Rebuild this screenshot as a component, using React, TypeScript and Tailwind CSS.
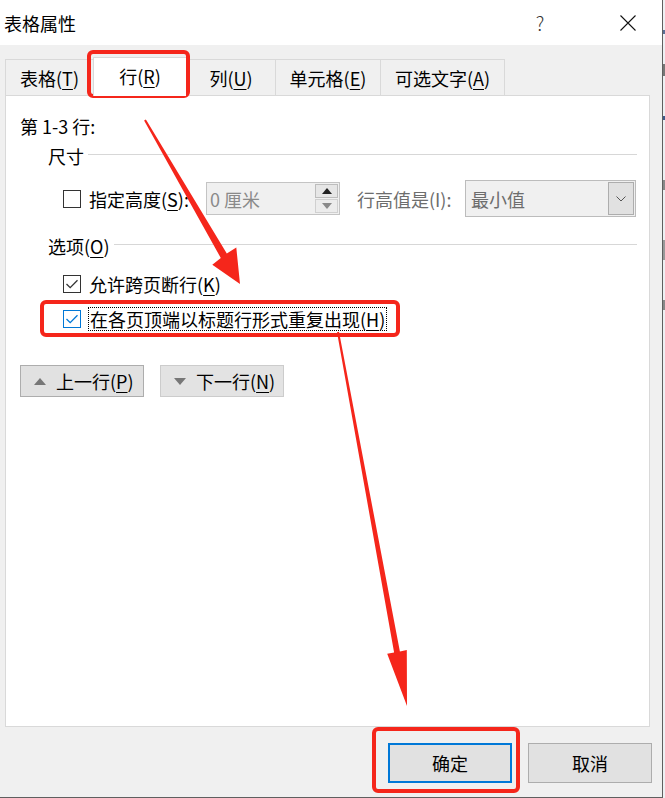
import React from "react";

function U({ c }: { c: string }) {
  return <span className="underline decoration-1 underline-offset-[3px]">{c}</span>;
}

function Check({ checked, focus }: { checked?: boolean; focus?: boolean }) {
  return (
    <div
      className={
        focus
          ? "w-[18px] h-[18px] border border-[#0078d7] bg-white flex items-center justify-center shrink-0"
          : "w-[18px] h-[18px] border border-[#333333] bg-white flex items-center justify-center shrink-0"
      }
    >
      {checked && (
        <svg width="16" height="16" viewBox="0 0 16 16">
          <path d="M2.5 8 L6.2 11.7 L13.5 4.3" fill="none" stroke={focus ? "#0078d7" : "#333333"} strokeWidth="1.3" />
        </svg>
      )}
    </div>
  );
}

function Tab({ w, active, last, children }: { w: string; active?: boolean; last?: boolean; children: React.ReactNode }) {
  if (active) {
    return (
      <div className={`${w} relative z-10 h-[39px] -mb-px bg-white border-t border-l border-[#d9d9d9] flex items-center justify-center pb-[2px]`}>
        {children}
      </div>
    );
  }
  return (
    <div
      className={
        last
          ? `${w} h-[36px] bg-[#f0f0f0] border-t border-l border-r border-[#d9d9d9] flex items-center justify-center`
          : `${w} h-[36px] bg-[#f0f0f0] border-t border-l border-[#d9d9d9] flex items-center justify-center`
      }
    >
      {children}
    </div>
  );
}

function GroupHeader({ children }: { children: React.ReactNode }) {
  return (
    <div className="flex items-center h-[24px] pl-[42px] pr-[12px]">
      <span>{children}</span>
      <div className="flex-1 h-px bg-[#d7d7d7] ml-[4px] -mt-[3px]" />
    </div>
  );
}

export default function App() {
  return (
    <div className="w-[665px] h-[798px] flex bg-[#f0f0f0] text-black text-[18px] leading-[24px] [font-family:'Noto_Sans_CJK_SC','Microsoft_YaHei',sans-serif] overflow-hidden relative">
      <div className="w-[663px] h-[798px] border-r border-b border-[#5f5f5f] flex flex-col bg-[#f0f0f0]">
        {/* Title bar */}
        <div className="h-[45px] bg-white flex items-center pl-[4px] pr-[14px]">
          <span className="text-[18px]">表格属性</span>
          <div className="flex-1" />
          <div className="w-[46px] flex justify-center text-[#333333] text-[19px] font-light">?</div>
          <div className="w-[40px] ml-[45px] flex justify-center">
            <svg width="16" height="16" viewBox="0 0 16 16">
              <path d="M0.5 0.5 L15.5 15.5 M15.5 0.5 L0.5 15.5" stroke="#111" strokeWidth="1.1" fill="none" />
            </svg>
          </div>
        </div>

        {/* Tabs */}
        <div className="h-[50px] flex items-end pl-[5px]">
          <Tab w="w-[88px]">
            表格(<U c="T" />)
          </Tab>
          <Tab w="w-[93px]" active>
            行(<U c="R" />)
          </Tab>
          <Tab w="w-[89px]">
            列(<U c="U" />)
          </Tab>
          <Tab w="w-[105px]">
            单元格(<U c="E" />)
          </Tab>
          <Tab w="w-[125px]" last>
            可选文字(<U c="A" />)
          </Tab>
        </div>

        {/* Panel */}
        <div className="ml-[5px] w-[645px] h-[632px] bg-white border border-[#d9d9d9] flex flex-col">
          <div className="mt-[18px] h-[24px] pl-[14px]">第 1-3 行:</div>
          <div className="mt-[6px]">
            <GroupHeader>尺寸</GroupHeader>
          </div>
          <div className="mt-[12px] h-[37px] flex items-center pl-[57px]">
            <Check />
            <div className="ml-[8px] w-[117px] whitespace-nowrap">
              指定高度(<U c="S" />):
            </div>
            <div className="w-[134px] h-[33px] border border-[#c4c4c4] bg-[#f0f0f0] flex items-center pl-[3px] pr-[1px]">
              <span className="text-[#8a8a8a] flex-1">0 厘米</span>
              <div className="w-[23px] h-[29px] flex flex-col gap-[1px]">
                <div className="h-[14px] bg-[#e6e6e6] border border-[#bdbdbd] flex items-center justify-center">
                  <svg width="10" height="6" viewBox="0 0 10 6">
                    <path d="M0 6 L5 0 L10 6 Z" fill="#222" />
                  </svg>
                </div>
                <div className="h-[14px] bg-[#ececec] border border-[#d0d0d0] flex items-center justify-center">
                  <svg width="10" height="6" viewBox="0 0 10 6">
                    <path d="M0 0 L10 0 L5 6 Z" fill="#8a8a8a" />
                  </svg>
                </div>
              </div>
            </div>
            <div className="ml-[17px] w-[108px] text-[#6d6d6d] whitespace-nowrap">行高值是(I):</div>
            <div className="w-[171px] h-[37px] border border-[#bcbcbc] bg-[#f0f0f0] flex items-center pl-[5px] pr-[1px]">
              <span className="flex-1 text-[#6d6d6d]">最小值</span>
              <div className="w-[26px] h-[33px] bg-[#e1e1e1] border border-[#adadad] flex items-center justify-center">
                <svg width="10" height="6" viewBox="0 0 10 6">
                  <path d="M0.5 0.5 L5 5 L9.5 0.5" fill="none" stroke="#555" strokeWidth="1" />
                </svg>
              </div>
            </div>
          </div>
          <div className="mt-[17px]">
            <GroupHeader>
              选项(<U c="O" />)
            </GroupHeader>
          </div>
          <div className="mt-[14px] h-[24px] flex items-center pl-[57px]">
            <Check checked />
            <div className="ml-[8px] whitespace-nowrap">
              允许跨页断行(<U c="K" />)
            </div>
          </div>
          <div className="mt-[11px] h-[24px] flex items-center pl-[57px]">
            <Check checked focus />
            <div className="ml-[7px] h-[24px] border border-dotted border-[#000] px-[1px] flex items-center whitespace-nowrap">
              在各页顶端以标题行形式重复出现(<U c="H" />)
            </div>
          </div>
          <div className="mt-[34px] h-[32px] flex items-center pl-[14px] gap-[16px]">
            <div className="w-[124px] h-[32px] bg-[#e1e1e1] border border-[#adadad] flex items-center pl-[13px]">
              <svg width="12" height="7" viewBox="0 0 12 7">
                <path d="M0 7 L6 0 L12 7 Z" fill="#777" />
              </svg>
              <span className="ml-[10px]">
                上一行(<U c="P" />)
              </span>
            </div>
            <div className="w-[124px] h-[32px] bg-[#e3e3e3] border border-[#cccccc] flex items-center pl-[13px]">
              <svg width="12" height="7" viewBox="0 0 12 7">
                <path d="M0 0 L12 0 L6 7 Z" fill="#777" />
              </svg>
              <span className="ml-[10px]">
                下一行(<U c="N" />)
              </span>
            </div>
          </div>
        </div>

        {/* Bottom buttons */}
        <div className="flex-1 flex justify-end items-start pt-[16px] pr-[10px] gap-[16px]">
          <div className="w-[124px] h-[40px] bg-[#e1e1e1] border-2 border-[#0078d7] flex items-center justify-center">确定</div>
          <div className="w-[124px] h-[40px] bg-[#e1e1e1] border border-[#adadad] flex items-center justify-center">取消</div>
        </div>
      </div>

      {/* Background window strip */}
      <div className="w-[2px] h-[798px] flex flex-col bg-[#eef0f3]">
        <div className="h-[30px]" />
        <div className="h-[4px] bg-[#5a6f96]" />
        <div className="h-[30px]" />
        <div className="h-[12px] bg-[#777]" />
        <div className="h-[40px]" />
        <div className="h-[4px] bg-[#3f5a8a]" />
        <div className="h-[60px]" />
        <div className="h-[10px] bg-[#888]" />
        <div className="h-[50px]" />
        <div className="h-[20px] bg-[#999]" />
        <div className="h-[40px]" />
        <div className="h-[10px] bg-[#888]" />
      </div>

      {/* Annotations */}
      <svg className="absolute left-0 top-0 pointer-events-none" width="665" height="798" viewBox="0 0 665 798">
        <rect x="89" y="52" width="99" height="44" rx="4" fill="none" stroke="#f5261b" strokeWidth="4" />
        <rect x="42" y="302" width="356" height="33" rx="4" fill="none" stroke="#f5261b" strokeWidth="4" />
        <rect x="374" y="729" width="144" height="62" rx="4" fill="none" stroke="#f5261b" strokeWidth="4" />
        <polygon
          points="145.9,119.5 226.8,253.4 236.3,247.6 240,284 212.3,264.8 220.8,258.0 144.1,120.5"
          fill="#f5261b"
        />
        <polygon
          points="339.0,331.8 399.9,651.4 406.8,650.1 407,706 387.2,653.7 394.1,652.4 337.0,332.2"
          fill="#f5261b"
        />
      </svg>
    </div>
  );
}
